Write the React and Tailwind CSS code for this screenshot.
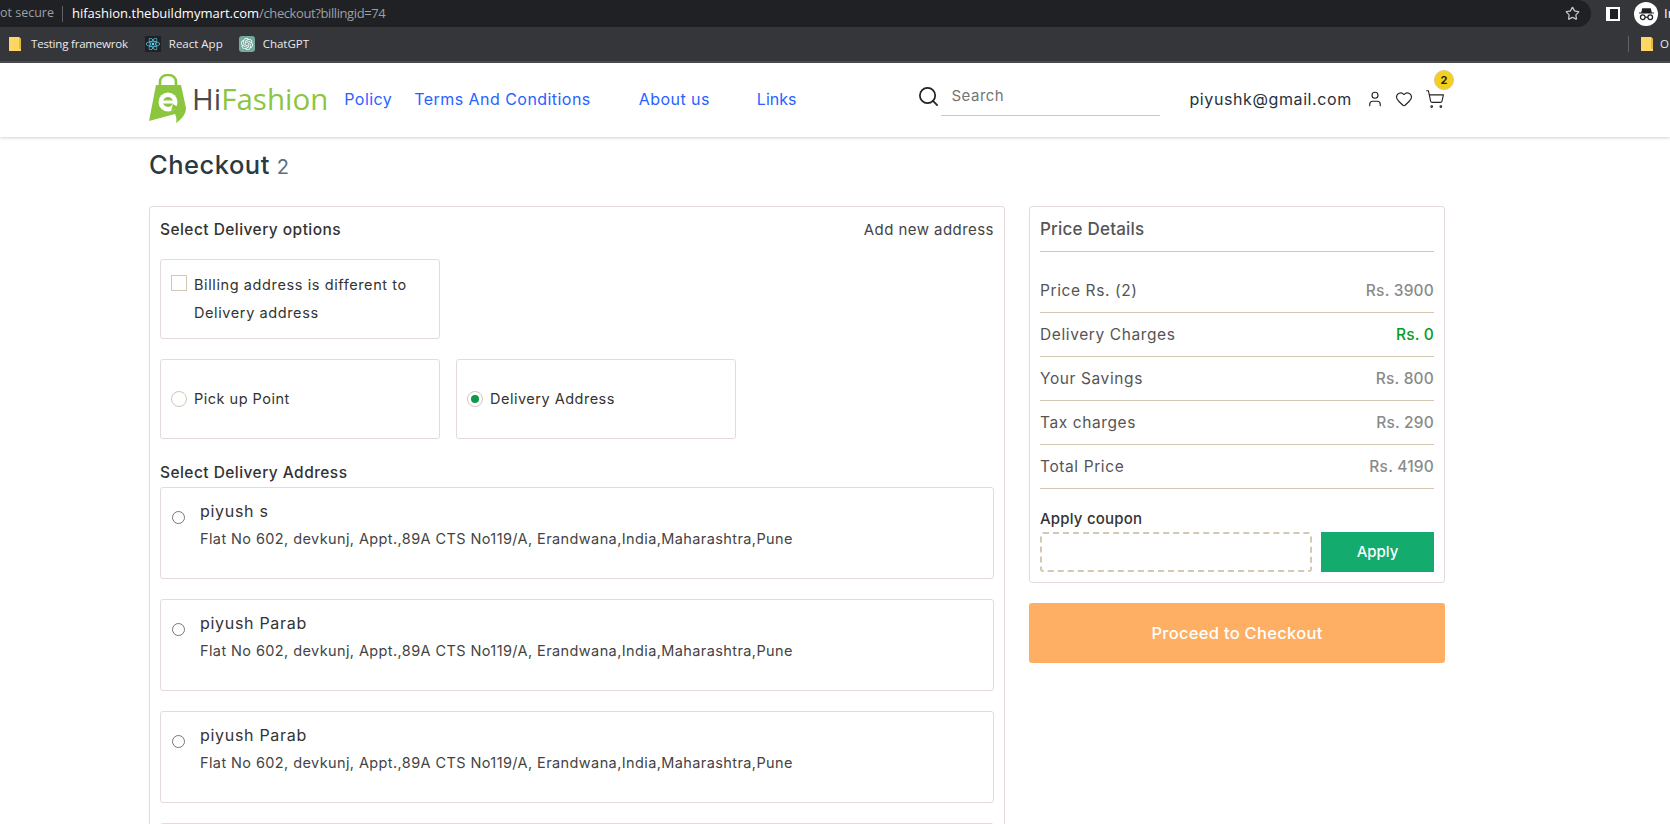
import React from 'react';
import { Search, User, Heart, ShoppingCart, Star } from 'lucide-react';
import { FaReact } from 'react-icons/fa';
import { SiOpenai } from 'react-icons/si';

const font = { fontFamily: 'Inter, "Noto Sans", sans-serif' };

const Folder = () => (
  <svg width="12" height="14" viewBox="0 0 12 14" className="shrink-0">
    <path d="M0 0h10l2 2v12H0z" fill="#fdd663" />
    <path d="M10 0v12h2V2z" fill="#e8b93f" />
  </svg>
);

const Logo = () => (
  <div className="flex items-center h-[50px]">
    <svg width="38" height="50" viewBox="0 0 38 50" className="shrink-0">
      <path d="M11 13V8c0-4 3-7 8-7s8 3 8 7v5" fill="none" stroke="#8cc63f" strokeWidth="2.6" />
      <path d="M7 11h25l5 23c0 6-4 11-10 15 1-4 0-7-1-9L0 47z" fill="#8cc63f" />
      <circle cx="19" cy="28" r="9.5" fill="#fff" />
      <circle cx="19" cy="28" r="5" fill="#8cc63f" />
      <rect x="13" y="26.5" width="12" height="3" fill="#fff" />
      <path d="M24 30l5 3-7 4z" fill="#8cc63f" />
    </svg>
    <span className="text-[29.5px] font-normal text-[#4a4a4a] ml-[5px] font-['Open_Sans']">Hi</span>
    <span className="text-[29.5px] font-normal text-[#8cc63f] font-['Open_Sans']">Fashion</span>
  </div>
);

const BrowserBar = () => (
  <div className="bg-[#35363a] font-['Open_Sans'] shrink-0">
    <div className="h-[27px] flex items-center overflow-hidden">
      <div className="w-[1591px] h-full shrink-0 bg-[#202124] rounded-r-[14px] flex items-center pr-3">
        <span className="text-[12.5px] text-[#9aa0a6] whitespace-nowrap">ot secure</span>
        <span className="h-[16px] w-px bg-[#5f6368] ml-[8px] mr-[9px]"></span>
        <span className="text-[13px] text-white">hifashion.thebuildmymart.com</span>
        <span className="text-[13px] text-[#9aa0a6] tracking-[-0.4px]">/checkout?billingid=74</span>
        <Star className="w-[15px] h-[15px] text-[#c4c7c5] ml-auto -mr-[1px]" strokeWidth={2} />
      </div>
      <div className="ml-[15px] w-[14px] h-[14px] shrink-0 border-2 border-white flex justify-end bg-white">
        <span className="w-[8px] h-full bg-[#202124]"></span>
      </div>
      <div className="ml-[14px] w-[24px] h-[24px] rounded-full bg-white flex items-center justify-center shrink-0">
        <svg width="17" height="17" viewBox="0 0 16 16">
          <path d="M4 3h8l1 4H3zM1 7h14v1H1z" fill="#202124" />
          <circle cx="4.5" cy="11.5" r="2.2" fill="none" stroke="#202124" strokeWidth="1.2" />
          <circle cx="11.5" cy="11.5" r="2.2" fill="none" stroke="#202124" strokeWidth="1.2" />
          <path d="M6.7 11.5h2.6" stroke="#202124" strokeWidth="1.2" />
        </svg>
      </div>
      <span className="text-[13px] text-white ml-[6px] shrink-0">In</span>
    </div>
    <div className="h-[36px] flex items-center pl-[9px] border-b-2 border-[#4a4b4f] text-[11.5px] text-[#e8eaed]">
      <Folder />
      <span className="ml-[10px] tracking-[-0.2px]">Testing framewrok</span>
      <span className="ml-[17px] w-[16px] h-[16px] bg-[#1f2124] flex items-center justify-center">
        <FaReact className="w-[14px] h-[14px] text-[#61dafb]" />
      </span>
      <span className="ml-[8px]">React App</span>
      <span className="ml-[16px] w-[16px] h-[16px] bg-[#74aa9c] rounded-[3px] flex items-center justify-center">
        <SiOpenai className="w-[12px] h-[12px] text-white" />
      </span>
      <span className="ml-[8px]">ChatGPT</span>
      <span className="ml-auto h-[16px] w-px bg-[#5f6368]"></span>
      <span className="ml-[12px]"><Folder /></span>
      <span className="ml-[7px] w-[10px]">O</span>
    </div>
  </div>
);

const Header = () => (
  <header className="h-[74px] bg-white shadow-[0_1px_3px_rgba(0,0,0,0.18)] flex items-center pl-[149px] pb-[2px] shrink-0 relative">
    <Logo />
    <nav className="flex items-center text-[16px] text-[#2962ff] tracking-[0.45px]">
      <a className="ml-[16px]">Policy</a>
      <a className="ml-[22px]">Terms And Conditions</a>
      <a className="ml-[48px]">About us</a>
      <a className="ml-[47px] tracking-[0px]">Links</a>
    </nav>
    <div className="ml-[121px] flex items-center -mt-[5px]">
      <Search className="w-[23px] h-[23px] text-[#222]" strokeWidth={1.8} />
      <div className="ml-[1px] w-[219px] h-[39px] border-b border-[#d3c8b4] flex items-center pl-[10px] text-[15px] tracking-[0.5px] text-[#757575]">Search</div>
    </div>
    <span className="ml-[29px] text-[16px] tracking-[0.6px] text-[#26313d]">piyushk@gmail.com</span>
    <User className="ml-[14px] w-[18px] h-[18px] text-[#222]" strokeWidth={1.5} />
    <Heart className="ml-[11px] w-[18px] h-[18px] text-[#222]" strokeWidth={1.5} />
    <div className="ml-[12px] relative">
      <ShoppingCart className="w-[20px] h-[20px] text-[#222]" strokeWidth={1.3} />
      <span className="absolute -top-[19px] left-[9px] w-[20px] h-[20px] rounded-full bg-[#f4d01c] border border-[#d8c98a] text-[11px] font-bold text-[#222] flex items-center justify-center">2</span>
    </div>
  </header>
);

const addresses = ['piyush s', 'piyush Parab', 'piyush Parab'];

const AddressCard = ({ name }) => (
  <div className="border border-[#e4dade] rounded-[3px] h-[92px] shrink-0 flex pl-[11px] pt-[11px] mb-[20px]">
    <span className="w-[13px] h-[13px] mt-[12px] rounded-full border border-[#767676] shrink-0"></span>
    <div className="ml-[15px]">
      <p className="text-[16px] leading-[24px] text-[#333] tracking-[0.7px]">{name}</p>
      <p className="mt-[6px] text-[14.5px] leading-[20px] text-[#444] tracking-[0.4px]">Flat No 602, devkunj, Appt.,89A CTS No119/A, Erandwana,India,Maharashtra,Pune</p>
    </div>
  </div>
);

const priceRows = [
  { label: 'Price Rs. (2)', value: 'Rs. 3900' },
  { label: 'Delivery Charges', value: 'Rs. 0', green: true },
  { label: 'Your Savings', value: 'Rs. 800' },
  { label: 'Tax charges', value: 'Rs. 290' },
  { label: 'Total Price', value: 'Rs. 4190' },
];

const App = () => (
  <div className="h-screen w-full overflow-hidden bg-white flex flex-col" style={font}>
    <BrowserBar />
    <Header />
    <main className="pl-[149px] w-[1446px] box-content">
      <h1 className="mt-[10px] h-[36px] flex items-baseline text-[25.5px] leading-[36px] font-medium text-[#2b3a42] tracking-[0.5px]">
        Checkout <span className="ml-[7px] text-[20px] font-normal text-[#5f6f7a]">2</span>
      </h1>
      <div className="mt-[23px] flex items-start gap-[24px]">
        {/* Delivery */}
        <section className="w-[856px] border border-[#e4dade] rounded-[3px] px-[10px] pt-[11px]">
          <div className="flex justify-between items-center h-[24px]">
            <h2 className="text-[15.5px] font-medium text-[#333] tracking-[0.45px]">Select Delivery options</h2>
            <span className="text-[15px] text-[#444] tracking-[0.45px]">Add new address</span>
          </div>
          <div className="mt-[17px] w-[280px] h-[80px] border border-[#e4dade] rounded-[3px] pl-[10px] pt-[15px] flex">
            <span className="w-[16px] h-[16px] border border-[#d3c8b4] shrink-0"></span>
            <p className="ml-[7px] text-[14.5px] leading-[28px] -mt-[4px] text-[#333] tracking-[0.6px]">Billing address is different to<br />Delivery address</p>
          </div>
          <div className="mt-[20px] flex gap-[16px]">
            <div className="w-[280px] h-[80px] border border-[#e4dade] rounded-[3px] pl-[10px] flex items-center">
              <span className="w-[16px] h-[16px] rounded-full border border-[#d3c8b4] shrink-0"></span>
              <span className="ml-[7px] text-[14.5px] text-[#333] tracking-[0.5px]">Pick up Point</span>
            </div>
            <div className="w-[280px] h-[80px] border border-[#e4dade] rounded-[3px] pl-[10px] flex items-center">
              <span className="w-[16px] h-[16px] rounded-full border border-[#d3c8b4] shrink-0 flex items-center justify-center">
                <span className="w-[8px] h-[8px] rounded-full bg-[#0a9a4a]"></span>
              </span>
              <span className="ml-[7px] text-[14.5px] text-[#333] tracking-[0.5px]">Delivery Address</span>
            </div>
          </div>
          <h2 className="mt-[22px] h-[24px] leading-[24px] text-[15.5px] font-medium text-[#333] tracking-[0.45px]">Select Delivery Address</h2>
          <div className="mt-[2px]">
            {addresses.map((name, i) => (
              <AddressCard key={i} name={name} />
            ))}
            <div className="border border-[#e4dade] rounded-[3px] h-[92px]"></div>
          </div>
        </section>

        {/* Price details */}
        <aside className="w-[416px]">
          <div className="border border-[#e4dade] rounded-[3px] px-[10px] h-[377px]">
            <h2 className="h-[45px] pt-[10px] leading-[24px] text-[17px] font-medium text-[#555] tracking-[0.2px] border-b border-[#d3c8b4]">Price Details</h2>
            <div className="pt-[17px]">
              {priceRows.map((row) => (
                <div key={row.label} className="h-[44px] border-b border-[#d3c8b4] flex items-center justify-between text-[15.5px]">
                  <span className="text-[#555] tracking-[0.6px]">{row.label}</span>
                  <span className={row.green ? 'text-[#0a9a1a] font-medium tracking-[0.2px]' : 'text-[#8a8a8a] font-medium tracking-[0.2px]'}>{row.value}</span>
                </div>
              ))}
            </div>
            <p className="mt-[19px] h-[22px] leading-[22px] text-[15px] font-medium text-[#333] tracking-[0.2px]">Apply coupon</p>
            <div className="mt-[2px] flex gap-[9px]">
              <div className="w-[272px] h-[40px] border-2 border-dashed border-[#d3c8b4] rounded-[3px]"></div>
              <button className="w-[113px] h-[40px] bg-[#13ab6e] text-white text-[15px] font-medium">Apply</button>
            </div>
          </div>
          <button className="mt-[20px] w-full h-[60px] bg-[#ffaf63] rounded-[3px] text-white text-[16.5px] font-medium tracking-[0.3px]">Proceed to Checkout</button>
        </aside>
      </div>
    </main>
  </div>
);

export default App;
